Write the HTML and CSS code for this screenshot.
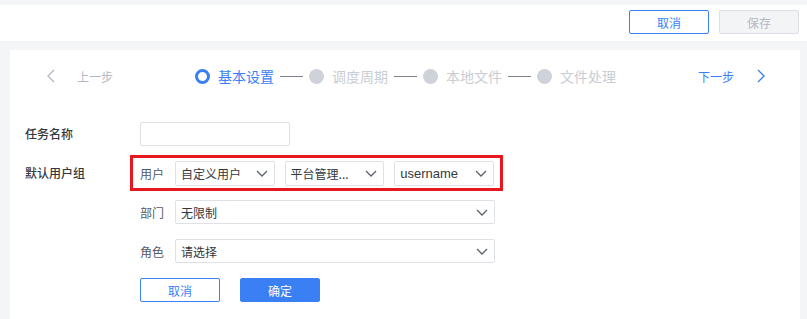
FILE: index.html
```html
<!DOCTYPE html>
<html lang="zh-CN">

<head>
    <meta charset="UTF-8">
    <meta name="viewport" content="width=device-width, initial-scale=1.0">
    <title>任务设置</title>
    <link rel="stylesheet" href="styles.css">
</head>

<body>
    <div class="topBar">
        <button class="btnLine">取消</button>
        <button class="btnDisabled">保存</button>
    </div>

    <div class="card">
        <div class="stepBar">
            <div class="stepNav prevNav">
                <svg class="arrowIcon" width="8" height="14" viewBox="0 0 8 14"><path d="M7 1 L1 7 L7 13" fill="none" stroke="currentColor" stroke-width="1.3"/></svg>
                <span>上一步</span>
            </div>
            <div class="steps">
                <div class="step active"><span class="dot"></span><span class="stepText">基本设置</span></div>
                <span class="stepLine"></span>
                <div class="step"><span class="dot"></span><span class="stepText">调度周期</span></div>
                <span class="stepLine"></span>
                <div class="step"><span class="dot"></span><span class="stepText">本地文件</span></div>
                <span class="stepLine"></span>
                <div class="step"><span class="dot"></span><span class="stepText">文件处理</span></div>
            </div>
            <div class="stepNav nextNav">
                <span>下一步</span>
                <svg class="arrowIcon" width="8" height="14" viewBox="0 0 8 14"><path d="M1 1 L7 7 L1 13" fill="none" stroke="currentColor" stroke-width="1.3"/></svg>
            </div>
        </div>

        <div class="form">
            <div class="formRow">
                <label class="formLabel">任务名称</label>
                <div class="inputBox nameInput"></div>
            </div>

            <div class="formRow">
                <label class="formLabel">默认用户组</label>
                <div class="groupBox">
                    <div class="redBox">
                        <span class="subLabel">用户</span>
                        <div class="selectBox small"><span>自定义用户</span><svg class="chev" width="12" height="7" viewBox="0 0 12 7"><path d="M1 1 L6 6 L11 1" fill="none" stroke="currentColor" stroke-width="1.3"/></svg></div>
                        <div class="selectBox small"><span>平台管理...</span><svg class="chev" width="12" height="7" viewBox="0 0 12 7"><path d="M1 1 L6 6 L11 1" fill="none" stroke="currentColor" stroke-width="1.3"/></svg></div>
                        <div class="selectBox small"><span class="latin">username</span><svg class="chev" width="12" height="7" viewBox="0 0 12 7"><path d="M1 1 L6 6 L11 1" fill="none" stroke="currentColor" stroke-width="1.3"/></svg></div>
                    </div>

                    <div class="subRow">
                        <span class="subLabel">部门</span>
                        <div class="selectBox wide"><span>无限制</span><svg class="chev" width="12" height="7" viewBox="0 0 12 7"><path d="M1 1 L6 6 L11 1" fill="none" stroke="currentColor" stroke-width="1.3"/></svg></div>
                    </div>

                    <div class="subRow">
                        <span class="subLabel">角色</span>
                        <div class="selectBox wide"><span>请选择</span><svg class="chev" width="12" height="7" viewBox="0 0 12 7"><path d="M1 1 L6 6 L11 1" fill="none" stroke="currentColor" stroke-width="1.3"/></svg></div>
                    </div>

                    <div class="actionRow">
                        <button class="btnLine">取消</button>
                        <button class="btnPrimary">确定</button>
                    </div>
                </div>
            </div>
        </div>
    </div>
</body>

</html>
```

FILE: styles.css
```css
* {
    margin: 0;
    padding: 0;
    box-sizing: border-box;
}

body {
    background-color: #f4f5f7;
    font-family: "Noto Sans CJK SC", "Noto Sans", sans-serif;
    font-size: 12px;
    color: #333840;
    overflow: hidden;
}

button {
    font-family: inherit;
    font-size: 12px;
    width: 80px;
    height: 24px;
    border-radius: 2px;
    cursor: pointer;
}

.btnLine {
    background: #fff;
    border: 1px solid #3a7ff5;
    color: #3a7ff5;
}

.btnDisabled {
    background: #f3f4f6;
    border: 1px solid #dcdfe5;
    color: #b4b8c0;
}

.btnPrimary {
    background: #3a80f4;
    border: 1px solid #3a80f4;
    color: #fff;
}

.topBar {
    margin-top: 5px;
    height: 36px;
    background: #fff;
    display: flex;
    justify-content: flex-end;
    align-items: flex-start;
    gap: 10px;
    padding: 5px 8px 0 0;
}

.card {
    margin: 9px 7px 0 10px;
    height: 269px;
    padding-top: 14px;
    background: #fff;
}

.stepBar {
    display: grid;
    grid-template-columns: 1fr auto 1fr;
    align-items: center;
    height: 24px;
    padding: 0 35px 0 36px;
}

.stepNav {
    display: flex;
    align-items: center;
    white-space: nowrap;
}

.prevNav {
    color: #b3b8c2;
    gap: 22px;
    padding-left: 1px;
}

.nextNav {
    color: #3a7ff5;
    gap: 23px;
    justify-self: end;
}

.steps {
    display: flex;
    align-items: center;
}

.step {
    display: flex;
    align-items: center;
    gap: 8px;
}

.dot {
    width: 15px;
    height: 15px;
    border-radius: 50%;
    background: #cfd2d9;
}

.stepText {
    font-size: 14px;
    color: #c9cdd4;
}

.step.active .dot {
    background: #fff;
    border: 3.5px solid #3a7ff5;
}

.step.active .stepText {
    color: #3a7ff5;
}

.stepLine {
    width: 23px;
    height: 1px;
    background: #7d828c;
    margin: 0 6px;
}

.form {
    padding: 34px 0 0 15px;
    display: flex;
    flex-direction: column;
    gap: 9px;
}

.formRow {
    display: flex;
    align-items: flex-start;
}

.formLabel {
    width: 115px;
    font-weight: 500;
    color: #333840;
    line-height: 24px;
}

.formRow:nth-child(2) .formLabel {
    line-height: 36px;
}

.inputBox {
    height: 24px;
    border: 1px solid #dfe1e6;
    border-radius: 2px;
}

.nameInput {
    width: 150px;
}

.groupBox {
    display: flex;
    flex-direction: column;
}

.redBox {
    margin-left: -10px;
    width: 373px;
    height: 36px;
    border: 3px solid #e8161f;
    display: flex;
    align-items: center;
    gap: 10px;
    padding: 0 6px 0 7px;
}

.subLabel {
    width: 25px;
    color: #555a64;
}

.redBox .subLabel {
    margin-right: -10px;
    width: 35px;
}

.selectBox {
    height: 25px;
    border: 1px solid #dfe1e6;
    border-radius: 2px;
    display: flex;
    align-items: center;
    justify-content: space-between;
    padding: 0 6px 0 5px;
    color: #333840;
}

.latin {
    font-family: "Liberation Sans", sans-serif;
    font-size: 13px;
}

.chev {
    color: #5b616d;
}

.small {
    width: 100px;
}

.wide {
    width: 320px;
    height: 24px;
}

.subRow {
    display: flex;
    align-items: center;
    gap: 10px;
    margin-top: 9px;
}

.subRow + .subRow {
    margin-top: 15px;
}

.actionRow {
    display: flex;
    gap: 20px;
    margin-top: 15px;
}
```
